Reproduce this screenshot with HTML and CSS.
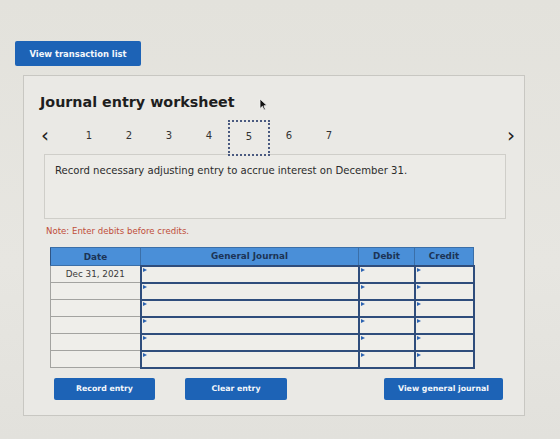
FILE: index.html
```html
<!DOCTYPE html>
<html lang="en">
<head>
<meta charset="utf-8">
<title>Journal entry worksheet</title>
<link rel="stylesheet" href="styles.css">
</head>
<body>
<div class="page">
  <button class="btn btn-top">View transaction list</button>

  <section class="panel">
    <div class="title-row">
      <h1 class="title">Journal entry worksheet</h1>
      <svg class="cursor" width="9" height="13" viewBox="0 0 9 13"><path d="M1 1 L1 10.5 L3.4 8.3 L5 12 L6.4 11.4 L4.9 7.8 L8 7.6 Z" fill="#111" stroke="#f2f2f2" stroke-width="0.8"/></svg>
    </div>

    <nav class="steps">
      <span class="arrow">&lsaquo;</span>
      <span class="step">1</span>
      <span class="step">2</span>
      <span class="step">3</span>
      <span class="step">4</span>
      <span class="step current">5</span>
      <span class="step">6</span>
      <span class="step">7</span>
      <span class="spacer"></span>
      <span class="arrow">&rsaquo;</span>
    </nav>

    <div class="task">Record necessary adjusting entry to accrue interest on December 31.</div>

    <p class="note">Note: Enter debits before credits.</p>

    <table class="journal">
      <thead>
        <tr>
          <th class="c-date">Date</th>
          <th class="c-gj">General Journal</th>
          <th class="c-dr">Debit</th>
          <th class="c-cr">Credit</th>
        </tr>
      </thead>
      <tbody>
        <tr><td class="date">Dec 31, 2021</td><td class="in"></td><td class="in"></td><td class="in"></td></tr>
        <tr><td class="date"></td><td class="in"></td><td class="in"></td><td class="in"></td></tr>
        <tr><td class="date"></td><td class="in"></td><td class="in"></td><td class="in"></td></tr>
        <tr><td class="date"></td><td class="in"></td><td class="in"></td><td class="in"></td></tr>
        <tr><td class="date"></td><td class="in"></td><td class="in"></td><td class="in"></td></tr>
        <tr><td class="date"></td><td class="in"></td><td class="in"></td><td class="in"></td></tr>
      </tbody>
    </table>

    <div class="actions">
      <button class="btn btn-record">Record entry</button>
      <button class="btn btn-clear">Clear entry</button>
      <span class="spacer"></span>
      <button class="btn btn-view">View general journal</button>
    </div>
  </section>
</div>
</body>
</html>
```

FILE: styles.css
```css
* { box-sizing: border-box; }

html, body {
  margin: 0;
  height: 100%;
}

body {
  background: linear-gradient(180deg, #e3e2dc 0%, #e7e6e1 60%, #e2e1dc 100%);
  font-family: "DejaVu Sans", Verdana, sans-serif;
  color: #2a2a2a;
  overflow: hidden;
}

.page {
  padding: 41px 0 0 15px;
}

.btn {
  display: inline-flex;
  align-items: center;
  justify-content: center;
  border: none;
  border-radius: 2px;
  background: #1d63b6;
  color: #f4f7fb;
  font-family: "DejaVu Sans", Verdana, sans-serif;
  font-weight: bold;
  font-size: 8px;
  padding: 0;
}

.btn-top {
  width: 126px;
  height: 25px;
  font-size: 8.4px;
}

.panel {
  margin: 9px 0 0 8px;
  width: 502px;
  height: 341px;
  border: 1px solid #c8c7c2;
  background: #eae9e5;
  padding: 15px 20px 0 16px;
}

.title-row {
  display: flex;
  align-items: center;
  height: 22px;
}

.title {
  margin: 0;
  font-size: 14.3px;
  font-weight: bold;
  color: #1e1e1e;
}

.cursor {
  margin-left: 24px;
  margin-top: 4px;
}

/* step pager: previous arrow, numbered steps, next arrow */
.steps {
  display: flex;
  align-items: center;
  height: 36px;
  margin: 7px -14px 0 0;
  font-size: 10px;
  color: #333;
}

.arrow {
  font-size: 20px;
  line-height: 1;
  color: #222;
  width: 14px;
  text-align: center;
  margin-top: -7px;
}

.steps .arrow:first-child {
  margin-left: -2px;
  margin-right: 17px;
}

.step {
  width: 40px;
  height: 36px;
  display: flex;
  align-items: center;
  justify-content: center;
  padding-bottom: 5px;
}

.step.current {
  border: 2px dotted #4a5a80;
  width: 42px;
  margin: 0 -1px;
  padding-bottom: 3px;
  background: #ebeae6;
  position: relative;
  z-index: 1;
}

.spacer { flex: 1; }

.task {
  margin: -2px 0 0 4px;
  width: 462px;
  height: 65px;
  border: 1px solid #cfcec9;
  background: #ecebe7;
  padding: 10px 10px;
  font-size: 10.1px;
  color: #2b2b2b;
}

.note {
  margin: 7px 0 0 6px;
  font-size: 8.6px;
  color: #c04e3a;
  height: 10px;
  line-height: 10px;
}

.journal {
  margin: 11px 0 0 10px;
  border-collapse: collapse;
  width: 423px;
  table-layout: fixed;
  font-size: 8.8px;
}

.journal th {
  background: #4a8fd8;
  color: #1c3455;
  font-weight: bold;
  height: 18px;
  padding: 0;
  border: 1px solid #3b6fa8;
  border-left: 1px solid #2f5585;
}

.c-date { width: 90px; }
.c-gj { width: 218px; }
.c-dr { width: 56px; }
.c-cr { width: 59px; }

.journal td {
  height: 17px;
  padding: 0;
  background: #efeeea;
}

.journal td.date {
  border: 1px solid #a3a3a0;
  text-align: center;
  color: #3a3a3a;
}

/* entry cells carry a small dropdown marker in the corner */
.journal td.in {
  border: 2px solid #2f4d7c;
  position: relative;
}

.journal td.in::before {
  content: "";
  position: absolute;
  left: 1px;
  top: 1px;
  border-style: solid;
  border-width: 2.5px 0 2.5px 4px;
  border-color: transparent transparent transparent #2b62b0;
}

.actions {
  display: flex;
  margin: 9px 0 0 14px;
  width: 449px;
}

.actions .btn {
  height: 22px;
  font-size: 7.8px;
}

.btn-record { width: 101px; }
.btn-clear { width: 102px; margin-left: 30px; }
.btn-view { width: 119px; }
```
